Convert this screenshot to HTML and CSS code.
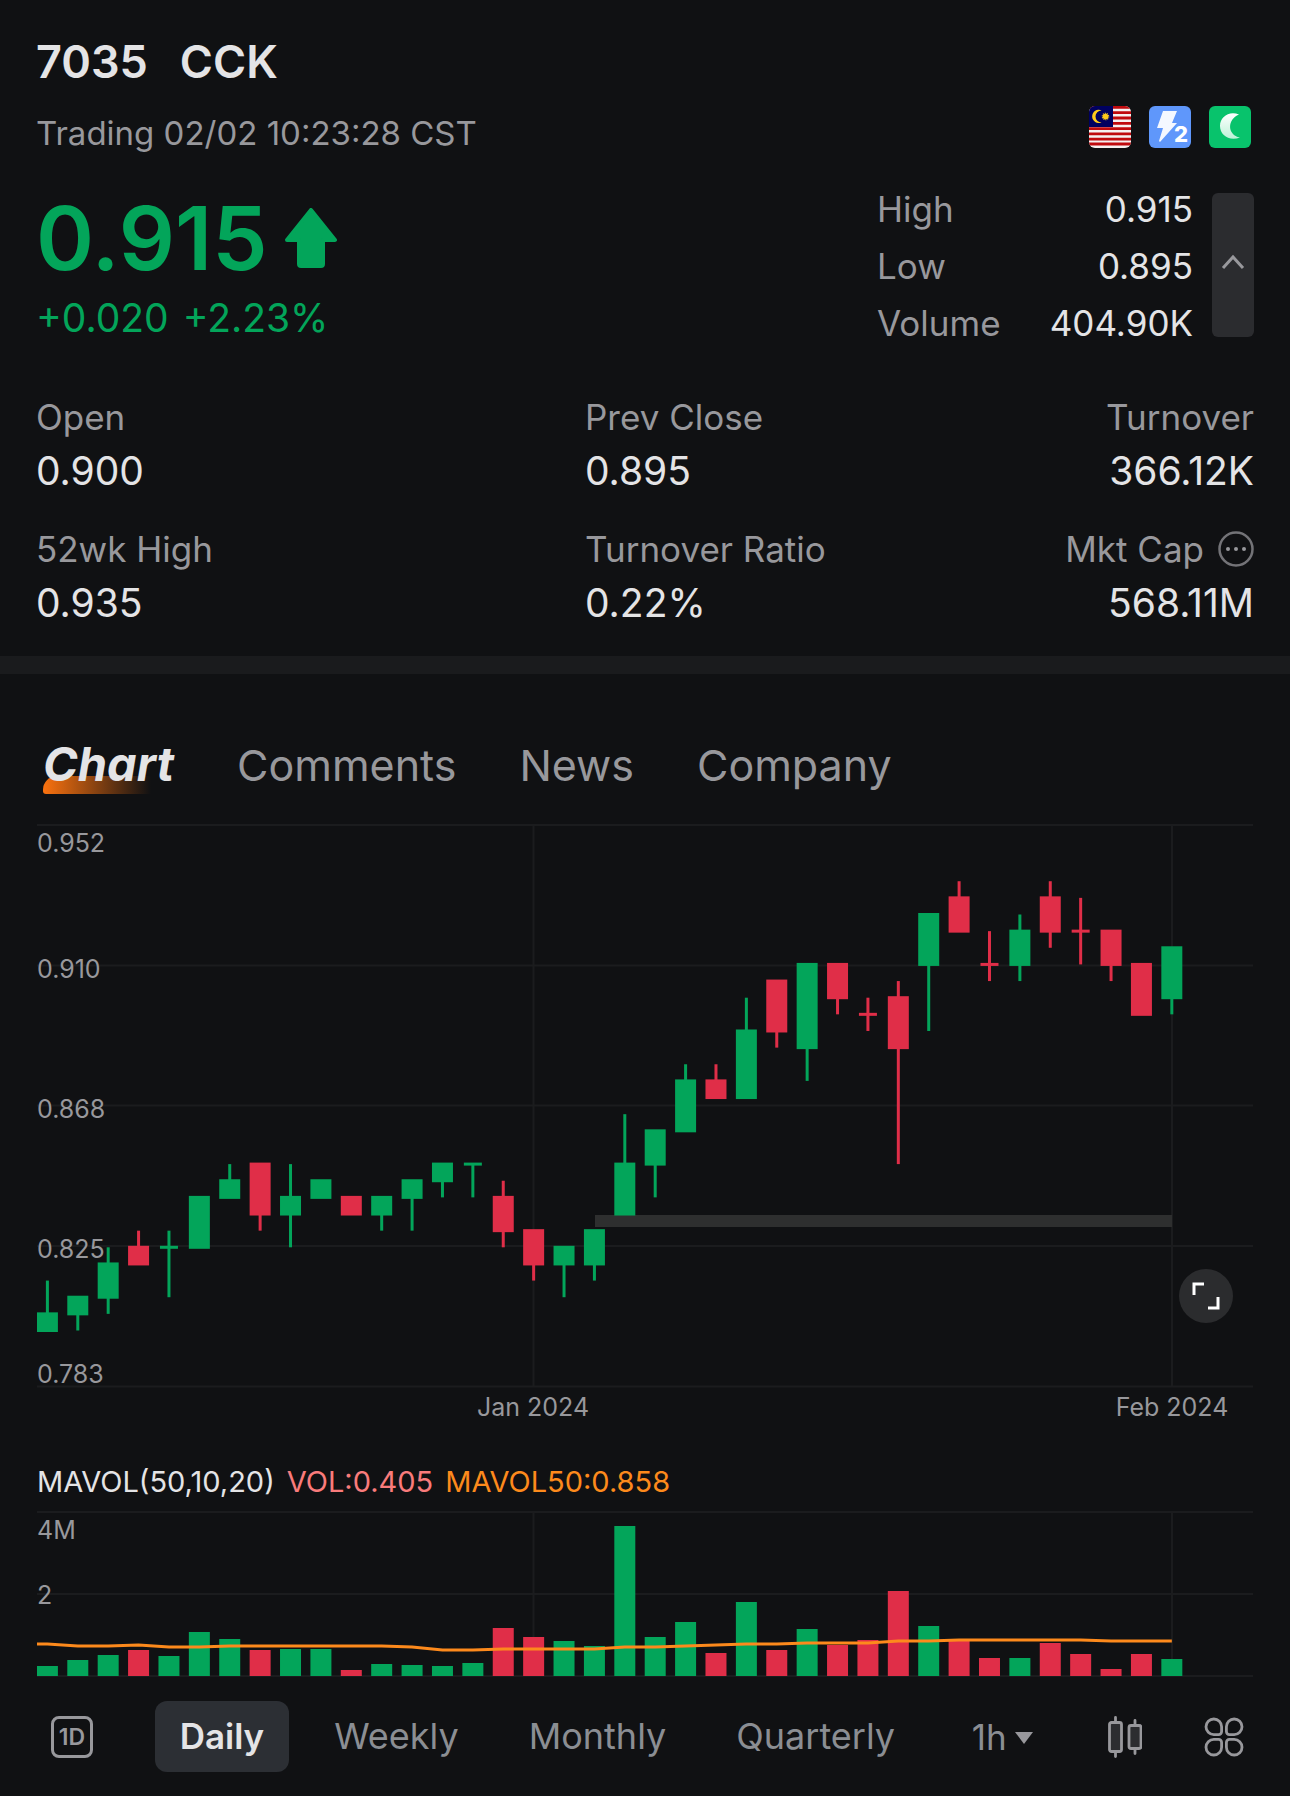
FILE: index.html
```html
<!DOCTYPE html>
<html lang="en">
<head>
    <meta charset="UTF-8">
    <meta name="viewport" content="width=device-width, initial-scale=1.0">
    <title>7035 CCK</title>
    <link rel="stylesheet" href="styles.css">
</head>
<body>
    <header class="quote">
        <h1 class="quote-title"><span>7035</span><span>CCK</span></h1>

        <div class="status-row">
            <p class="status">Trading 02/02 10:23:28 CST</p>
            <div class="badges">
                <svg class="badge" viewBox="0 0 42 42" role="img" aria-label="Malaysia">
                    <rect width="42" height="42" fill="#f5f0f0"/>
                    <path d="M0 1.400h42M0 6.700h42M0 12h42M0 17.300h42M0 22.600h42M0 27.900h42M0 33.200h42M0 38h42" stroke="#c00a0e" stroke-width="2.800"/>
                    <rect width="24" height="21" fill="#00005f"/>
                    <path d="M12.500 4.400a6.600 6.600 0 1 0 0 12a6 6 0 1 1 0-12z" fill="#ffc91a"/>
                    <circle cx="16.500" cy="10.500" r="2.800" fill="#ffc91a"/>
                    <circle cx="16.500" cy="10.500" r="3.200" fill="none" stroke="#ffc91a" stroke-width="1.200" stroke-dasharray="1 1"/>
                </svg>
                <svg class="badge" viewBox="0 0 42 42" role="img" aria-label="Level 2">
                    <rect width="42" height="42" fill="#5f97fb"/>
                    <path d="M14 5h14l-5 12h5L11 36l-1-1 4-13H8z" fill="#f4f8ff"/>
                    <text class="badge-text" x="25" y="36">2</text>
                </svg>
                <svg class="badge" viewBox="0 0 42 42" role="img" aria-label="Night mode">
                    <defs>
                        <linearGradient id="moon" x1="0" y1="0" x2="0" y2="1">
                            <stop offset="0" stop-color="#ffffff"/>
                            <stop offset="1" stop-color="#bdf2d8"/>
                        </linearGradient>
                    </defs>
                    <rect width="42" height="42" fill="#08c36c"/>
                    <path d="M30 8.500C20 4.500 11 11 11 20s9 15.500 20 11.500C18 29 18 13.500 30 8.500z" fill="url(#moon)"/>
                </svg>
            </div>
        </div>

        <div class="price-row">
            <div class="price-block">
                <div class="price">
                    <span>0.915</span>
                    <svg class="arrow" viewBox="0 0 54 60" aria-hidden="true">
                        <path d="M27 2L51 32H39V56Q39 58 37 58H17Q15 58 15 56V32H3z" fill="#03a55a" stroke="#03a55a" stroke-width="4" stroke-linejoin="round"/>
                    </svg>
                </div>
                <p class="change"><span>+0.020</span><span>+2.23%</span></p>
            </div>
            <dl class="day">
                <div><dt>High</dt><dd>0.915</dd></div>
                <div><dt>Low</dt><dd>0.895</dd></div>
                <div><dt>Volume</dt><dd>404.90K</dd></div>
            </dl>
            <button class="collapse" type="button" aria-label="Collapse">
                <svg viewBox="0 0 24 22" width="24" height="22"><path d="M2 14L12 3l10 11" fill="none" stroke="#98989c" stroke-width="3"/></svg>
            </button>
        </div>

        <dl class="stats">
            <div><dt>Open</dt><dd>0.900</dd></div>
            <div><dt>Prev Close</dt><dd>0.895</dd></div>
            <div><dt>Turnover</dt><dd>366.12K</dd></div>
            <div><dt>52wk High</dt><dd>0.935</dd></div>
            <div><dt>Turnover Ratio</dt><dd>0.22%</dd></div>
            <div>
                <dt>Mkt Cap
                    <button class="more" type="button" aria-label="More">
                        <svg viewBox="0 0 36 36" width="36" height="36">
                            <circle cx="18" cy="18" r="16.500" fill="none" stroke="#737377" stroke-width="2.500"/>
                            <g fill="#98989c"><circle cx="10" cy="18" r="2"/><circle cx="18" cy="18" r="2"/><circle cx="26" cy="18" r="2"/></g>
                        </svg>
                    </button>
                </dt>
                <dd>568.11M</dd>
            </div>
        </dl>
    </header>

    <nav class="tabs">
        <a class="tab active" href="#chart">Chart</a>
        <a class="tab" href="#comments">Comments</a>
        <a class="tab" href="#news">News</a>
        <a class="tab" href="#company">Company</a>
    </nav>

    <main class="charts" id="chart">
        <div class="chart-box">
            <svg class="chart" id="candles" viewBox="0 0 1216 600" role="img" aria-label="Daily candles">
                <path class="grid" d="M0 1H1216M0 141.500H1216M0 281.500H1216M0 422H1216M0 562.500H1216M496.500 1V562M1135 1V562"/>
                <rect x="558" y="391" width="577" height="12" fill="#2e2f2f"/>
                <text x="0" y="28">0.952</text>
                <text x="0" y="154">0.910</text>
                <text x="0" y="294">0.868</text>
                <text x="0" y="434">0.825</text>
                <text x="0" y="559">0.783</text>
                <text class="mid" x="496" y="592">Jan 2024</text>
                <text class="mid" x="1135" y="592">Feb 2024</text>
            </svg>
            <button class="fullscreen" type="button" aria-label="Full screen">
                <svg viewBox="0 0 30 30" width="30" height="30"><path d="M3 14V3H13M17 27H27V16" fill="none" stroke="#fff" stroke-width="3"/></svg>
            </button>
        </div>

        <p class="legend">
            <span>MAVOL(50,10,20)</span>
            <span class="vol">VOL:0.405</span>
            <span class="mavol">MAVOL50:0.858</span>
        </p>

        <svg class="chart" id="volume" viewBox="0 0 1216 166" role="img" aria-label="Volume">
            <path class="grid" d="M0 1H1216M0 83H1216M0 165H1216M496.500 1V165M1135 1V165"/>
            <text x="0" y="28">4M</text>
            <text x="0" y="93">2</text>
        </svg>
    </main>

    <div class="toolbar">
        <button class="one-day" type="button">1D</button>
        <div class="periods">
            <button class="period active" type="button">Daily</button>
            <button class="period" type="button">Weekly</button>
            <button class="period" type="button">Monthly</button>
            <button class="period" type="button">Quarterly</button>
        </div>
        <div class="hours">
            <select aria-label="Interval">
                <option>1h</option>
                <option>2h</option>
            </select>
            <svg class="caret" viewBox="0 0 18 12" width="18" height="12"><path d="M0 0H18L9 12z" fill="#98989c"/></svg>
        </div>
        <button type="button" aria-label="Chart type">
            <svg viewBox="0 0 34 42" width="34" height="42" fill="#2c2d30" stroke="#98989c" stroke-width="2.800" stroke-linecap="round">
                <path d="M7.500 1.500V6M7.500 36V40.500M27 4.500V9M27 33V37.500"/>
                <rect x="1.500" y="6.500" width="12" height="29" rx="2"/>
                <rect x="21" y="9.500" width="12" height="23" rx="2"/>
            </svg>
        </button>
        <button type="button" aria-label="Indicators">
            <svg viewBox="0 0 40 40" width="40" height="40" fill="none" stroke="#98989c" stroke-width="2.800">
                <path d="M9.800 2A7.800 7.800 0 0 0 9.800 17.600H14.600A3 3 0 0 0 17.600 14.600V9.800A7.800 7.800 0 0 0 9.800 2z"/>
                <path d="M30.200 2A7.800 7.800 0 0 1 30.200 17.600H25.400A3 3 0 0 1 22.400 14.600V9.800A7.800 7.800 0 0 1 30.200 2z"/>
                <path d="M9.800 38A7.800 7.800 0 0 1 9.800 22.400H14.600A3 3 0 0 1 17.600 25.400V30.200A7.800 7.800 0 0 1 9.800 38z"/>
                <path d="M30.200 38A7.800 7.800 0 0 0 30.200 22.400H25.400A3 3 0 0 0 22.400 25.400V30.200A7.800 7.800 0 0 0 30.200 38z"/>
            </svg>
        </button>
    </div>

    <script src="chart.js"></script>
</body>
</html>
```
FILE: styles.css
```css
* {
    box-sizing: border-box;
}

body {
    margin: 0;
    background: #101113;
    color: #e4e4e6;
    font-family: Inter, "Liberation Sans", sans-serif;
    font-size: 35px;
}

h1, p, dl, dd {
    margin: 0;
}

button, select {
    font: inherit;
    color: inherit;
    background: none;
    border: 0;
    padding: 0;
    cursor: pointer;
}

svg {
    display: block;
}

/* Quote */
.quote {
    padding: 32px 36px 26px;
    border-bottom: 18px solid #1a1b1d;
}

.quote-title {
    display: flex;
    gap: 32px;
    font-size: 45px;
    font-weight: 600;
    line-height: 60px;
}

.status-row {
    display: flex;
    justify-content: space-between;
    padding: 14px 3px 0 0;
}

.status {
    color: #98989c;
    font-size: 33px;
    line-height: 54px;
}

.badges {
    display: flex;
    gap: 18px;
}

.badge {
    width: 42px;
    height: 42px;
    border-radius: 6px;
}

.badge-text {
    font-size: 22px;
    font-weight: 800;
    fill: #fff;
}

.price-row {
    display: flex;
    gap: 19px;
    padding-top: 21px;
}

.price-block {
    flex: 1;
    padding-top: 7px;
    color: #03a55a;
}

.price {
    display: flex;
    align-items: center;
    gap: 16px;
    font-size: 88px;
    font-weight: 600;
    line-height: 100px;
}

.arrow {
    width: 54px;
    height: 60px;
}

.change {
    display: flex;
    gap: 14px;
    font-size: 39px;
    line-height: 60px;
}

.day {
    width: 316px;
    line-height: 57px;
}

.day div {
    display: flex;
    justify-content: space-between;
}

dt {
    color: #98989c;
}

.collapse {
    display: flex;
    align-items: center;
    justify-content: center;
    width: 42px;
    height: 144px;
    margin-top: 12px;
    background: #2b2c2f;
    border-radius: 6px;
}

.stats {
    display: grid;
    grid-template-columns: 549px 1fr auto;
    row-gap: 24px;
    padding-top: 38px;
}

.stats dt {
    display: flex;
    align-items: center;
    gap: 14px;
    line-height: 54px;
}

.stats dd {
    font-size: 39px;
    line-height: 54px;
}

.stats div:nth-child(3n) {
    text-align: right;
}

.stats div:nth-child(3n) dt {
    justify-content: flex-end;
}

/* Tabs */
.tabs {
    display: flex;
    align-items: baseline;
    gap: 63px;
    padding: 60px 43px 29px;
    font-size: 43px;
    line-height: 60px;
}

.tab {
    color: #98989c;
    text-decoration: none;
}

.tab.active {
    position: relative;
    z-index: 0;
    color: #e4e4e6;
    font-size: 47px;
    font-weight: 700;
    font-style: italic;
}

.tab.active::before {
    content: '';
    position: absolute;
    left: 0;
    bottom: 0;
    z-index: -1;
    width: 108px;
    height: 18px;
    border-radius: 14px 0 0 3px;
    background: linear-gradient(90deg, #fa720f, rgba(250, 114, 15, 0));
}

/* Charts */
.charts {
    padding: 0 37px;
}

.chart-box {
    position: relative;
}

.chart {
    width: 100%;
    height: auto;
    font-size: 25px;
    fill: #98989c;
}

.chart .grid {
    fill: none;
    stroke: #1b1c1e;
    stroke-width: 2;
}

.chart .mid {
    text-anchor: middle;
}

.up {
    fill: #03a55a;
}

.down {
    fill: #e02e48;
}

.average {
    fill: none;
    stroke: #fd8a1c;
    stroke-width: 3;
}

.fullscreen {
    position: absolute;
    right: 20px;
    bottom: 101px;
    display: flex;
    align-items: center;
    justify-content: center;
    width: 54px;
    height: 54px;
    border-radius: 50%;
    background: #2b2c2e;
}

.legend {
    display: flex;
    gap: 12px;
    padding: 38px 0 9px;
    font-size: 29px;
    line-height: 40px;
}

.vol {
    color: #f97b7b;
}

.mavol {
    color: #fd8a1c;
}

/* Toolbar */
.toolbar {
    display: flex;
    align-items: center;
    justify-content: space-between;
    padding: 24px 46px 24px 51px;
    color: #8b8e93;
}

.one-day {
    width: 42px;
    height: 42px;
    border: 3px solid #98989c;
    border-radius: 8px;
    color: #98989c;
    font-size: 23px;
    font-weight: 600;
    line-height: 36px;
}

.periods {
    display: flex;
    gap: 20px;
}

.period {
    padding: 0 25px;
    border-radius: 12px;
    font-size: 36px;
    line-height: 71px;
}

.period.active {
    background: #2c2f34;
    color: #e4e4e6;
    font-size: 35px;
    font-weight: 600;
}

.hours {
    position: relative;
    margin: 0 14px 0 -10px;
}

.hours select {
    appearance: none;
    padding-right: 18px;
}

.caret {
    position: absolute;
    right: 0;
    top: 16px;
    pointer-events: none;
}
```
FILE: chart.js
```js
// Prices are in ticks of 0.005 counted from 0.825: [open, close, high, low, volume]
const days = [
    [-5, -4, -2, -5, 10], [-4, -3, -3, -5, 16], [-3, -1, 0, -4, 21], [0, -1, 1, -1, 26],
    [0, 0, 1, -3, 20], [0, 3, 3, 0, 44], [3, 4, 5, 3, 37], [5, 2, 5, 1, 26],
    [2, 3, 5, 0, 27], [3, 4, 4, 3, 27], [3, 2, 3, 2, 6], [2, 3, 3, 1, 12],
    [3, 4, 4, 1, 11], [4, 5, 5, 3, 10], [5, 5, 5, 3, 13], [3, 1, 4, 0, 48],
    [1, -1, 1, -2, 39], [-1, 0, 0, -3, 35], [-1, 1, 1, -2, 30], [2, 5, 8, 2, 150],
    [5, 7, 7, 3, 39], [7, 10, 11, 7, 54], [10, 9, 11, 9, 23], [9, 13, 15, 9, 74],
    [16, 13, 16, 12, 26], [12, 17, 17, 10, 47], [17, 15, 17, 14, 31], [14, 14, 15, 13, 36],
    [15, 12, 16, 5, 85], [17, 20, 20, 13, 50], [21, 19, 22, 19, 35], [17, 17, 19, 16, 18],
    [17, 19, 20, 16, 18], [21, 19, 22, 18, 33], [19, 19, 21, 17, 22], [19, 17, 19, 16, 7],
    [17, 14, 17, 14, 22], [15, 18, 18, 14, 17]
];

const levelDown = [27, 31, 34];

// 50 day volume average
const average = [
    32, 30, 30, 31, 29, 29, 30, 30, 30, 30, 30, 30, 29, 26, 26, 27, 27, 27, 27, 29,
    29, 30, 31, 32, 32, 33, 33, 33, 35, 35, 36, 36, 36, 36, 36, 35, 35, 35
];

const candles = document.getElementById('candles');
const volume = document.getElementById('volume');

function x(i) {
    return 10.4 + i * 30.39;
}

function y(tick) {
    return 423.3 - tick * 16.64;
}

function add(parent, tag, attrs) {
    const el = document.createElementNS('http://www.w3.org/2000/svg', tag);
    for (let name in attrs) {
        el.setAttribute(name, attrs[name]);
    }
    parent.appendChild(el);
}

days.forEach(([open, close, high, low, vol], i) => {
    const color = close < open || levelDown.includes(i) ? 'down' : 'up';
    const half = open === close ? 9 : 10.5;
    const top = y(Math.max(open, close)) - 1.5;
    const bottom = y(Math.min(open, close)) + 1.5;

    add(candles, 'rect', { class: color, x: x(i) - 1.5, y: y(high), width: 3, height: y(low) - y(high) });
    add(candles, 'rect', { class: color, x: x(i) - half, y: top, width: half * 2, height: bottom - top });
    add(volume, 'rect', { class: color, x: x(i) - 10.5, y: 165 - vol, width: 21, height: vol });
});

const points = average.map((v, i) => `${x(i)},${165 - v}`);
add(volume, 'polyline', { class: 'average', points: `0,133 ${points.join(' ')}` });
```
